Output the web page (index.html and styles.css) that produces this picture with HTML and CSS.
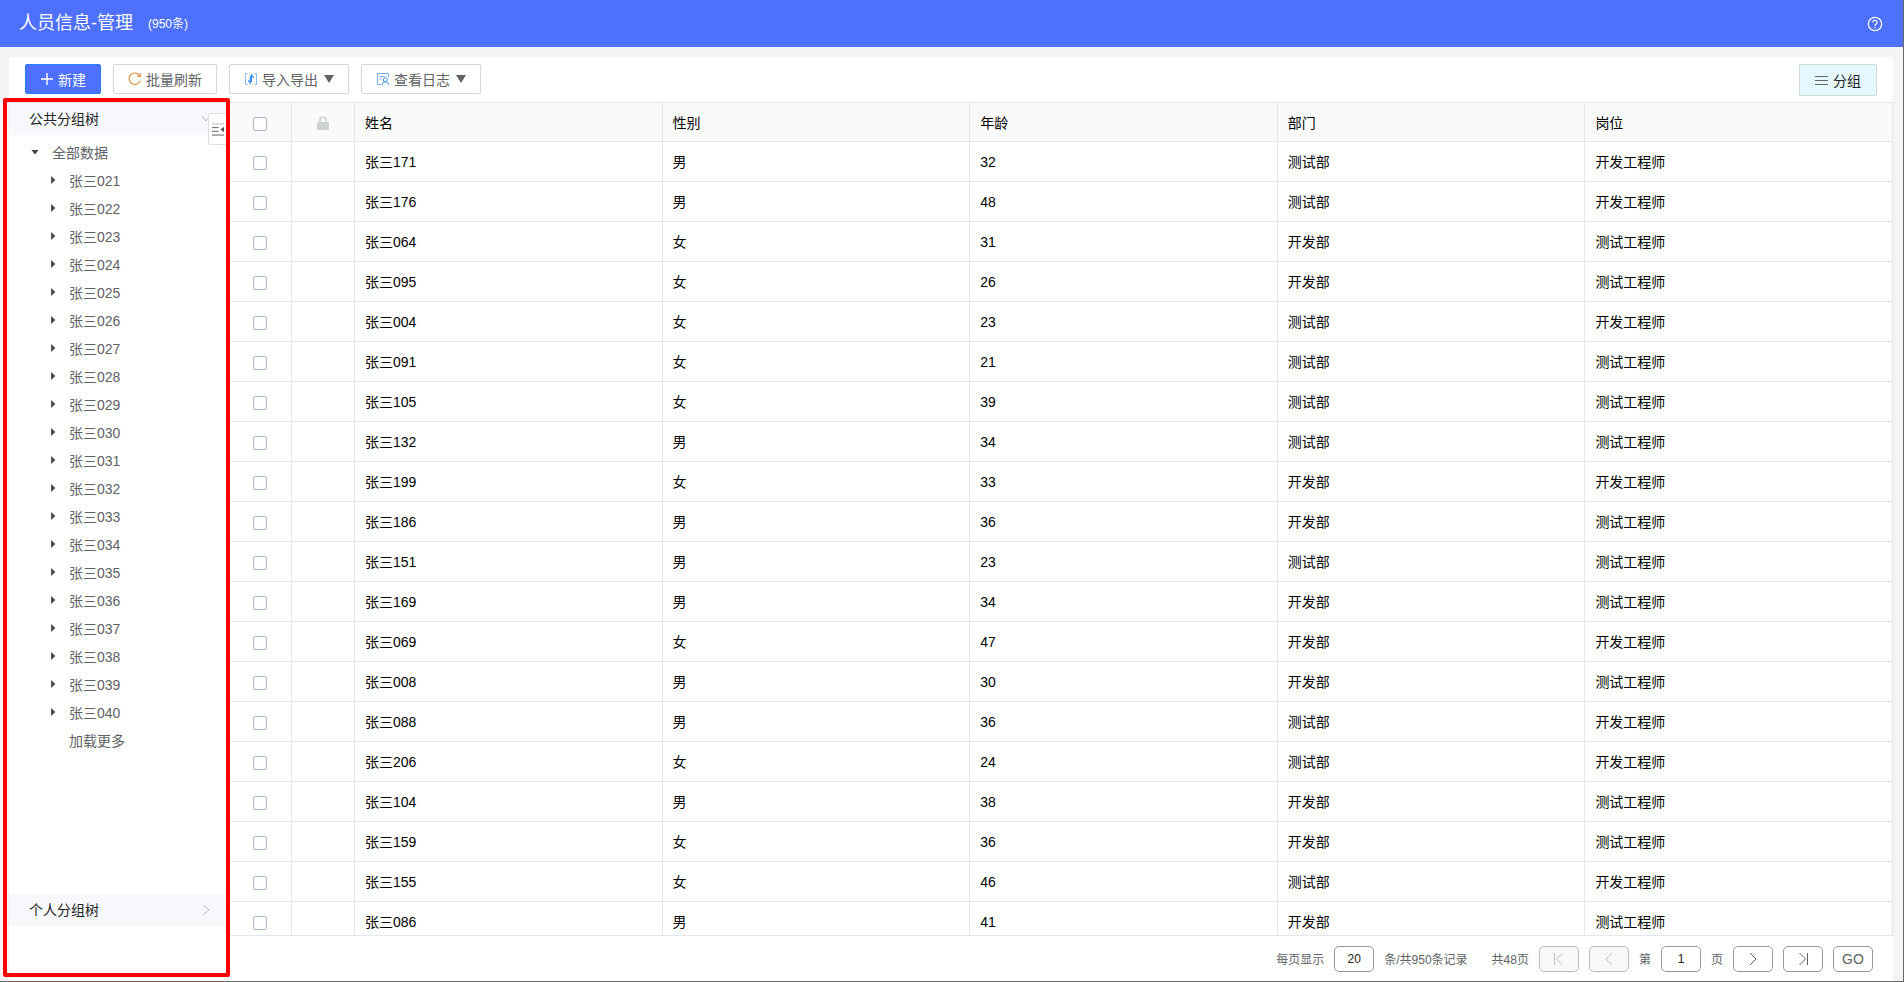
FILE: index.html
```html
<!DOCTYPE html>
<html lang="zh-CN">
<head>
    <meta charset="UTF-8">
    <meta name="viewport" content="width=device-width, initial-scale=1.0">
    <title>人员信息-管理</title>
    <link rel="stylesheet" href="styles.css">
</head>
<body>
    <header class="page-header">
        <h1>人员信息-管理</h1>
        <span class="total">(950条)</span>
        <button class="help" aria-label="帮助">
            <svg width="16" height="16" viewBox="0 0 16 16" fill="none" stroke="currentColor" stroke-width="1.2">
                <circle cx="8" cy="8" r="6.7"/>
                <path d="M5.9 6.4a2.1 2.1 0 1 1 3.3 1.7C8.4 8.7 8 9 8 9.900M8 11v1.3"/>
            </svg>
        </button>
    </header>

    <main class="panel">
        <div class="toolbar">
            <button class="btn primary">
                <svg width="14" height="14" viewBox="0 0 14 14" stroke="currentColor" stroke-width="1.4"><path d="M7 1v12M1 7h12"/></svg>
                新建
            </button>
            <button class="btn">
                <svg class="orange" width="14" height="14" viewBox="0 0 14 14" fill="none" stroke="currentColor" stroke-width="1.2"><path d="M12.2 8.8A5.700 5.700 0 1 1 11.6 3.5M12.3 1.2v3.2H9.100"/></svg>
                批量刷新
            </button>
            <button class="btn">
                <svg class="blue" width="14" height="14" viewBox="0 0 14 14" fill="none" stroke="currentColor"><path opacity=".6" d="M3.500 1.500h-2v11h2M10.500 1.500h2v11h-2"/><path stroke-width="1.2" d="M7.500 10V3l2.200 2.600M6.300 4v7L4.200 8.400"/></svg>
                导入导出
                <svg class="caret" width="10" height="8" viewBox="0 0 10 8" fill="currentColor"><path d="M0 0h10L5 8z"/></svg>
            </button>
            <button class="btn">
                <svg class="blue" width="14" height="14" viewBox="0 0 14 14" fill="none" stroke="currentColor"><path opacity=".7" d="M5 12.500H1.500v-11h11V5M3.500 4.500h5M3.500 7h2"/><circle cx="9.300" cy="7.700" r="2"/><path d="M6 13c.2-2 1.500-3.200 3.300-3.200s3.200 1.200 3.500 3.200"/></svg>
                查看日志
                <svg class="caret" width="10" height="8" viewBox="0 0 10 8" fill="currentColor"><path d="M0 0h10L5 8z"/></svg>
            </button>
            <button class="btn group">
                <svg width="14" height="14" viewBox="0 0 14 14" stroke="#666"><path d="M0 3.500h13M0 7.500h13M0 11.500h13"/></svg>
                分组
            </button>
        </div>

        <div class="content">
            <aside class="sidebar">
                <button class="tree-title">
                    公共分组树
                    <svg width="8" height="12" viewBox="0 0 8 12" fill="none" stroke="currentColor"><path d="M0 4l4 5 4-5"/></svg>
                </button>
                <button class="collapse" aria-label="收起">
                    <svg width="14" height="16" viewBox="0 0 14 16" stroke="#555" fill="#555"><path stroke="#bbb" d="M0 2.500h13"/><path d="M0 6.500h7M0 10.500h7M0 14.500h13"/><path stroke="none" d="M13 5.500v6L9 8.500z"/></svg>
                </button>
                <ul class="tree">
                    <li class="root"><i class="arrow open"></i><a href="#">全部数据</a></li>
                </ul>
                <button class="tree-title personal">
                    个人分组树
                    <svg width="8" height="12" viewBox="0 0 8 12" fill="none" stroke="currentColor"><path d="M1 2l6 5-6 5"/></svg>
                </button>
            </aside>

            <section class="list">
                <div class="table-wrap">
                    <table>
                        <thead>
                            <tr>
                                <th class="check"><input type="checkbox" aria-label="全选"></th>
                                <th class="lock">
                                    <svg width="12" height="14" viewBox="0 0 12 14" fill="none" stroke="#ccd2ce"><path stroke-width="1.5" d="M3 7V4a3 3 0 0 1 6 0v3"/><path fill="#ccd2ce" d="M.5 6.500h11v7H.5z"/></svg>
                                </th>
                                <th>姓名</th>
                                <th>性别</th>
                                <th>年龄</th>
                                <th>部门</th>
                                <th>岗位</th>
                            </tr>
                        </thead>
                        <tbody id="rows"></tbody>
                    </table>
                </div>
                <footer class="pager">
                    <label for="size">每页显示</label>
                    <input type="text" id="size" value="20">
                    <span>条/共950条记录</span>
                    <span class="pages">共48页</span>
                    <button disabled aria-label="首页"><svg width="12" height="14" viewBox="0 0 12 14" fill="none" stroke="currentColor"><path d="M1.500 1v12M9.500 1l-6 6 6 6"/></svg></button>
                    <button disabled aria-label="上一页"><svg width="12" height="14" viewBox="0 0 12 14" fill="none" stroke="currentColor"><path d="M9 1L3 7l6 6"/></svg></button>
                    <label for="page">第</label>
                    <input type="text" id="page" value="1">
                    <span>页</span>
                    <button aria-label="下一页"><svg width="12" height="14" viewBox="0 0 12 14" fill="none" stroke="currentColor"><path d="M3 1l6 6-6 6"/></svg></button>
                    <button aria-label="末页"><svg width="12" height="14" viewBox="0 0 12 14" fill="none" stroke="currentColor"><path d="M2.500 1l6 6-6 6M10.500 1v12"/></svg></button>
                    <button>GO</button>
                </footer>
            </section>
            <div class="highlight"></div>
        </div>
    </main>
    <script src="script.js"></script>
</body>
</html>
```
FILE: styles.css
```css
* {
    box-sizing: border-box;
}

body {
    margin: 0;
    height: 100vh;
    display: flex;
    flex-direction: column;
    background-color: #f4f4f4;
    border-right: 1px solid #666;
    border-bottom: 1px solid #666;
    font-family: "Liberation Sans", "Noto Sans CJK SC", sans-serif;
    font-size: 14px;
    color: #000;
    overflow: hidden;
}

button,
input {
    font: inherit;
    margin: 0;
}

button {
    cursor: pointer;
}

.page-header {
    display: flex;
    align-items: center;
    height: 47px;
    flex: none;
    padding: 0 20px 0 19px;
    background-color: #4d70ff;
    color: #fff;
}

.page-header h1 {
    margin: 0;
    padding-bottom: 2px;
    font-size: 18px;
    font-weight: normal;
    line-height: 24px;
}

.total {
    margin-left: 15px;
    padding-bottom: 2px;
    font-size: 12px;
}

.help {
    display: flex;
    margin-left: auto;
    padding: 0;
    border: none;
    background: none;
    color: #fff;
}

.panel {
    flex: 1;
    min-height: 0;
    display: flex;
    flex-direction: column;
    margin: 10px 10px 0 9px;
    background-color: #fff;
}

.toolbar {
    display: flex;
    align-items: flex-start;
    gap: 12px;
    height: 45px;
    flex: none;
    padding: 7px 16px;
}

.btn {
    display: flex;
    align-items: center;
    gap: 4px;
    height: 30px;
    padding: 0 14px;
    border: 1px solid #d0dad2;
    border-radius: 2px;
    background-color: #fff;
    color: #606266;
    white-space: nowrap;
}

.btn.primary {
    border-color: #2680f5;
    background-color: #4d70ff;
    color: #fff;
}

.btn.group {
    height: 32px;
    margin-left: auto;
    padding: 0 15px;
    border-color: #cbdcd5;
    background-color: #e6f8ff;
    color: #222;
}

.caret {
    margin-left: 2px;
}

.orange {
    color: #e8914a;
}

.blue {
    color: #3a8cf0;
}

.content {
    position: relative;
    flex: 1;
    min-height: 0;
    display: flex;
}

.sidebar {
    position: relative;
    width: 220px;
    flex: none;
    display: flex;
    flex-direction: column;
    padding-bottom: 55px;
    border-top: 1px solid #e4e6ed;
    border-right: 1px solid #e4e6ed;
}

.tree-title {
    display: flex;
    align-items: center;
    justify-content: space-between;
    height: 32px;
    flex: none;
    padding: 0 18px 2px 20px;
    border: none;
    background-color: #f6f8fc;
    color: #222;
}

.tree-title svg {
    color: #b4bcc4;
}

.collapse {
    position: absolute;
    top: 10px;
    right: 0;
    width: 20px;
    height: 32px;
    padding: 0 3px;
    display: flex;
    align-items: center;
    border: 1px solid #dcdfe6;
    border-right: none;
    border-radius: 3px 0 0 3px;
    background-color: #fff;
}

.tree {
    flex: 1;
    margin: 0;
    padding: 3px 0 0;
    list-style: none;
}

.tree li {
    display: flex;
    align-items: center;
    gap: 13px;
    height: 28px;
    padding-left: 40px;
}

.tree .root {
    padding-left: 22px;
}

.tree a {
    color: #606266;
    text-decoration: none;
}

.arrow {
    width: 7px;
    height: 8px;
    background-color: #444;
    clip-path: polygon(30% 0, 30% 100%, 90% 50%);
}

.arrow.open {
    width: 8px;
    height: 5px;
    clip-path: polygon(0 0, 100% 0, 50% 100%);
}

.tree .more .arrow {
    visibility: hidden;
}

.list {
    flex: 1;
    min-width: 0;
    display: flex;
    flex-direction: column;
}

.table-wrap {
    flex: 1;
    min-height: 0;
    overflow: hidden;
    border-top: 1px solid #e4e6ed;
    border-bottom: 1px solid #e4e6ed;
}

table {
    width: 100%;
    table-layout: fixed;
    border-collapse: separate;
    border-spacing: 0;
}

th,
td {
    height: 40px;
    padding: 0 10px;
    border-right: 1px solid #e4e6ed;
    border-bottom: 1px solid #e4e6ed;
    font-weight: normal;
    line-height: 20px;
    text-align: left;
}

th {
    height: 39px;
    padding-top: 2px;
    background-color: #fafafa;
}

.check {
    width: 63px;
    padding: 2px 0 0 24px;
}

th.check {
    padding-top: 4px;
}

.lock {
    width: 63px;
    text-align: center;
}

.lock svg {
    display: block;
    margin: 0 auto;
}

input[type="checkbox"] {
    appearance: none;
    display: block;
    width: 14px;
    height: 14px;
    border: 1px solid #a9b8c6;
    border-radius: 2px;
    background-color: #fff;
}

.pager {
    display: flex;
    align-items: center;
    justify-content: flex-end;
    gap: 10px;
    height: 45px;
    flex: none;
    padding: 0 20px 0 0;
    font-size: 12px;
    color: #606266;
}

.pager .pages {
    margin-left: 14px;
}

.pager input,
.pager button {
    display: flex;
    align-items: center;
    justify-content: center;
    width: 40px;
    height: 26px;
    padding: 0;
    border: 1px solid #999;
    border-radius: 5px;
    background-color: #fff;
    color: #606266;
    text-align: center;
}

.pager input {
    color: #222;
}

.pager button {
    font-size: 14px;
}

.pager button:disabled {
    border-color: #b4bcc4;
    background-color: #f8f8f8;
    color: #b8c4c0;
}

/* red frame round the group tree */
.highlight {
    position: absolute;
    top: -4px;
    left: -6px;
    bottom: 4px;
    width: 227px;
    border: 4px solid #f00;
    border-radius: 2px;
    pointer-events: none;
}
```
FILE: script.js
```js
const people = [
    ['171', '男', 32, '测试部', '开发工程师'],
    ['176', '男', 48, '测试部', '开发工程师'],
    ['064', '女', 31, '开发部', '测试工程师'],
    ['095', '女', 26, '开发部', '测试工程师'],
    ['004', '女', 23, '测试部', '开发工程师'],
    ['091', '女', 21, '测试部', '测试工程师'],
    ['105', '女', 39, '测试部', '测试工程师'],
    ['132', '男', 34, '测试部', '测试工程师'],
    ['199', '女', 33, '开发部', '开发工程师'],
    ['186', '男', 36, '开发部', '测试工程师'],
    ['151', '男', 23, '测试部', '测试工程师'],
    ['169', '男', 34, '开发部', '测试工程师'],
    ['069', '女', 47, '开发部', '开发工程师'],
    ['008', '男', 30, '开发部', '测试工程师'],
    ['088', '男', 36, '测试部', '开发工程师'],
    ['206', '女', 24, '测试部', '开发工程师'],
    ['104', '男', 38, '开发部', '测试工程师'],
    ['159', '女', 36, '开发部', '测试工程师'],
    ['155', '女', 46, '测试部', '开发工程师'],
    ['086', '男', 41, '开发部', '测试工程师']
];

const rows = document.getElementById('rows');
people.forEach(([no, ...cells]) => {
    const name = '张三' + no;
    rows.insertAdjacentHTML('beforeend',
        `<tr><td class="check"><input type="checkbox" aria-label="${name}"></td><td></td><td>${name}</td>` +
        cells.map(cell => `<td>${cell}</td>`).join('') + '</tr>');
});

const tree = document.querySelector('.tree');
for (let i = 21; i <= 40; i++) {
    tree.insertAdjacentHTML('beforeend', `<li><i class="arrow"></i><a href="#">张三0${i}</a></li>`);
}
tree.insertAdjacentHTML('beforeend', '<li class="more"><i class="arrow"></i><a href="#">加载更多</a></li>');
```
